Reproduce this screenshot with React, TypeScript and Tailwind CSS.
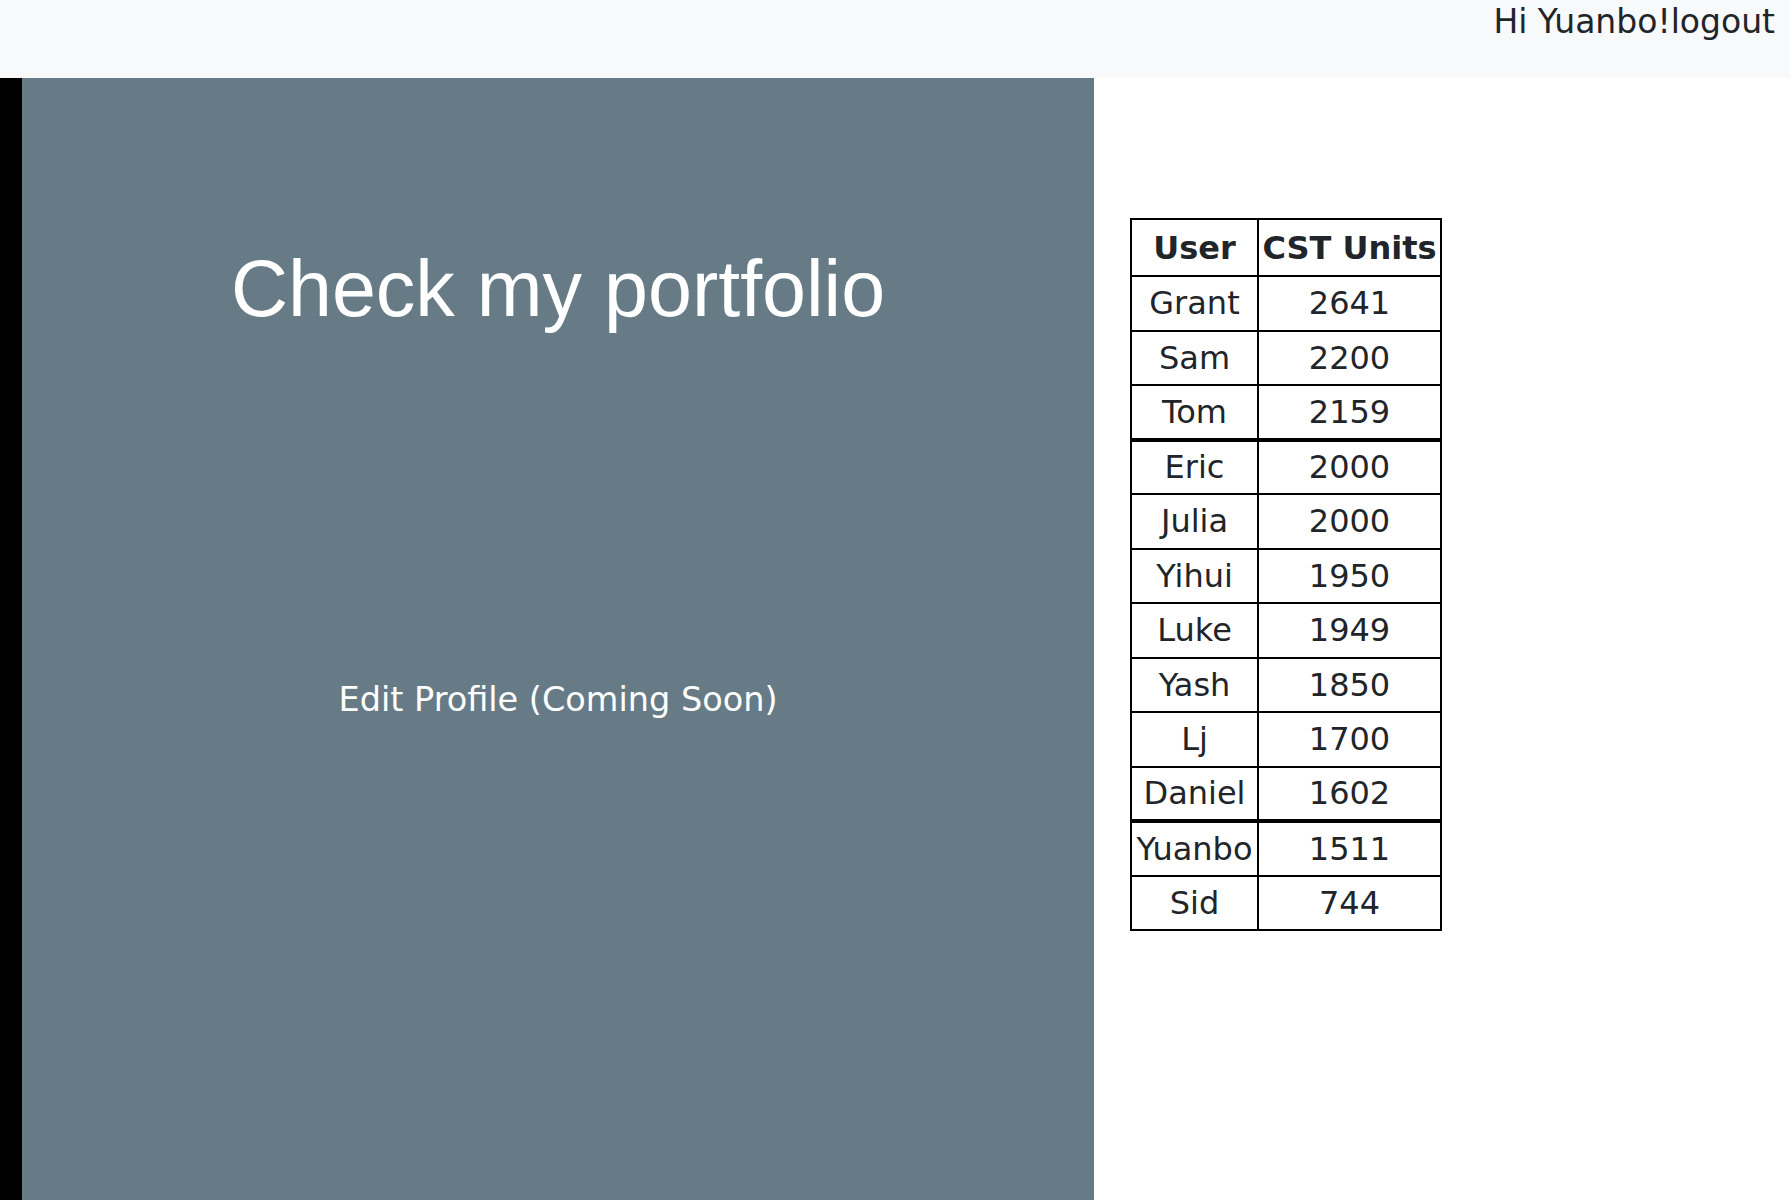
import React from 'react';

interface LeaderRow {
  user: string;
  units: number;
  thick?: boolean;
}

const rows: LeaderRow[] = [
  { user: 'Grant', units: 2641 },
  { user: 'Sam', units: 2200 },
  { user: 'Tom', units: 2159, thick: true },
  { user: 'Eric', units: 2000 },
  { user: 'Julia', units: 2000 },
  { user: 'Yihui', units: 1950 },
  { user: 'Luke', units: 1949 },
  { user: 'Yash', units: 1850 },
  { user: 'Lj', units: 1700 },
  { user: 'Daniel', units: 1602, thick: true },
  { user: 'Yuanbo', units: 1511 },
  { user: 'Sid', units: 744 },
];

const verdana = "font-['Verdana','DejaVu_Sans',sans-serif]";

function Header() {
  return (
    <header className="h-[78px] bg-[#f8f9fa] flex justify-end items-start pt-[5px] pr-[15px]">
      <span className={`${verdana} text-[33px] leading-none text-[#212529]`}>
        Hi Yuanbo!logout
      </span>
    </header>
  );
}

function Leaderboard() {
  return (
    <table
      className={`${verdana} border-collapse border-2 border-black text-[32px] leading-none text-[#212529] w-[312px] table-fixed`}
    >
      <thead>
        <tr className="h-[57px]">
          <th className="w-[127px] border-2 border-black p-0 font-bold text-center">User</th>
          <th className="border-2 border-black p-0 font-bold text-center">CST Units</th>
        </tr>
      </thead>
      <tbody>
        {rows.map((row) => (
          <tr
            key={row.user}
            className={`h-[54.5px] ${row.thick ? 'border-b-4 border-black' : ''}`}
          >
            <td className="border-2 border-black p-0 text-center whitespace-nowrap">{row.user}</td>
            <td className="border-2 border-black p-0 text-center">{row.units}</td>
          </tr>
        ))}
      </tbody>
    </table>
  );
}

export default function App() {
  return (
    <div className="w-[1790px] h-[1200px] overflow-hidden bg-white flex flex-col">
      <Header />
      <div className="flex flex-1 min-h-0">
        <div className="w-[22px] bg-black" />
        <section className="w-[1072px] bg-[#667b86] flex flex-col items-center">
          <h1 className="mt-[171px] font-['Liberation_Sans','Arial',sans-serif] text-[79px] leading-none text-white">
            Check my portfolio
          </h1>
          <p className={`mt-[355px] ${verdana} text-[33.5px] leading-none text-white`}>
            Edit Profile (Coming Soon)
          </p>
        </section>
        <div className="pl-[36px] pt-[140px]">
          <Leaderboard />
        </div>
      </div>
    </div>
  );
}
